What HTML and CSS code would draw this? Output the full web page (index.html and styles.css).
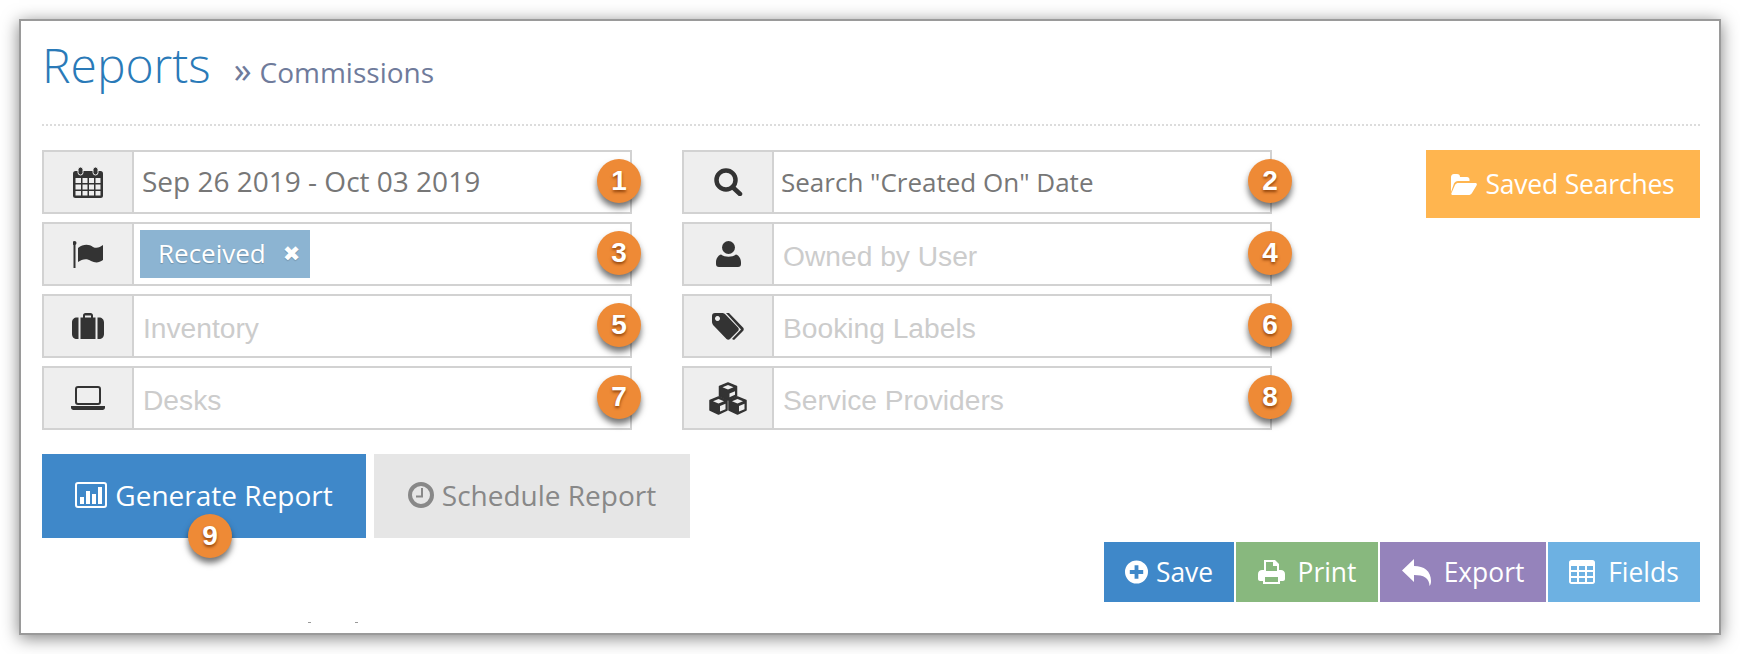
FILE: index.html
```html
<!DOCTYPE html>
<html lang="en">
<head>
<meta charset="utf-8">
<title>Reports - Commissions</title>
<link rel="stylesheet" href="styles.css">
</head>
<body>
<div class="panel">
  <header class="head">
    <h1 class="title">Reports</h1>
    <span class="crumb"><span class="raquo">»</span>Commissions</span>
  </header>
  <div class="filters">
    <div class="grid">
      <div class="field">
        <div class="addon"><svg class="ic" width="30" height="31" viewBox="0 0 30 31"><rect x="0" y="4" width="30" height="27" rx="2.5" fill="#333"/><rect x="5" y="0" width="5" height="8" rx="2.5" fill="#333" stroke="#eee"/><rect x="20" y="0" width="5" height="8" rx="2.5" fill="#333" stroke="#eee"/><g fill="#eee"><rect x="2.5" y="11" width="5.5" height="5"/><rect x="9.5" y="11" width="5" height="5"/><rect x="16" y="11" width="5" height="5"/><rect x="22.5" y="11" width="5" height="5"/><rect x="2.5" y="17.5" width="5.5" height="5"/><rect x="9.5" y="17.5" width="5" height="5"/><rect x="16" y="17.5" width="5" height="5"/><rect x="22.5" y="17.5" width="5" height="5"/><rect x="2.5" y="24" width="5.5" height="4.5"/><rect x="9.5" y="24" width="5" height="4.5"/><rect x="16" y="24" width="5" height="4.5"/><rect x="22.5" y="24" width="5" height="4.5"/></g></svg></div>
        <div class="value value-date">Sep 26 2019 - Oct 03 2019</div>
        <span class="badge">1</span>
      </div>
      <div class="field">
        <div class="addon"><svg class="ic" width="29" height="28" viewBox="0 0 29 28"><circle cx="12" cy="12" r="9.5" fill="none" stroke="#333" stroke-width="4.5"/><path d="M18.5 19l7.5 7" stroke="#333" stroke-width="4.5" stroke-linecap="round"/></svg></div>
        <div class="value">Search "Created On" Date</div>
        <span class="badge badge-edge">2</span>
      </div>
      <div class="field">
        <div class="addon"><svg class="ic" width="30" height="27" viewBox="0 0 30 27"><rect x="0.5" y="2" width="2" height="25" fill="#333"/><circle cx="1.5" cy="2" r="2" fill="#333"/><path d="M5 7C10 3 16 3 20 6c4 2 7 0 10-2v15c-4 3-8 3-12 1-4-3-9-2-13 1z" fill="#333"/></svg></div>
        <div class="value value-tags"><span class="tag">Received<span class="tag-x">✖</span></span></div>
        <span class="badge">3</span>
      </div>
      <div class="field">
        <div class="addon"><svg class="ic" width="25" height="26" viewBox="0 0 25 26"><circle cx="12.5" cy="6.5" r="6.5" fill="#333"/><path d="M5 13.500c4 3 11 3 15 0 3 1 5 4 5 8v1.500c0 2-1 3-3 3H3c-2 0-3-1-3-3v-1.500c0-4 2-7 5-8z" fill="#333"/></svg></div>
        <div class="value placeholder">Owned by User</div>
        <span class="badge badge-edge">4</span>
      </div>
      <div class="field">
        <div class="addon"><svg class="ic" width="32" height="26" viewBox="0 0 32 26"><path d="M11 5V2.500C11 1 12 0 13.500 0h5C20 0 21 1 21 2.500V5h-2V2.500h-6V5z" fill="#333"/><path d="M5 4.500h1.500V26H5c-3 0-5-2-5-5V9.500c0-3 2-5 5-5zM8.500 4.500h15V26h-15zM25.500 4.500H27c3 0 5 2 5 5V21c0 3-2 5-5 5h-1.500z" fill="#333"/></svg></div>
        <div class="value placeholder">Inventory</div>
        <span class="badge">5</span>
      </div>
      <div class="field">
        <div class="addon"><svg class="ic" width="33" height="27" viewBox="0 0 33 27"><path fill-rule="evenodd" d="M0 3C0 1 1 0 3 0h7c1.500 0 2.500.5 3.500 1.500L26 14.500c1 1 1 2.500 0 3.500l-8 8c-1 1-2.500 1-3.500 0L2 13c-1-1-2-2.500-2-4zM5.500 3a2.500 2.500 0 1 0 .01 0z" fill="#333"/><path d="M17 0l14 14.500c1 1 1 2.500 0 3.500l-9 9-2-1 9-9.500L14 0z" fill="#333"/></svg></div>
        <div class="value placeholder">Booking Labels</div>
        <span class="badge badge-edge">6</span>
      </div>
      <div class="field">
        <div class="addon"><svg class="ic" width="34" height="24" viewBox="0 0 34 24"><rect x="5" y="1" width="24" height="17" rx="2" fill="none" stroke="#333" stroke-width="2"/><path d="M0 20h34v1.500c0 1.500-1 2.500-2.500 2.500h-29C1 24 0 23 0 21.500z" fill="#333"/></svg></div>
        <div class="value placeholder">Desks</div>
        <span class="badge">7</span>
      </div>
      <div class="field">
        <div class="addon"><svg class="ic" width="38" height="33" viewBox="0 0 38 33"><g fill="#333" stroke="#333" stroke-width="1.500" stroke-linejoin="round"><path d="M19 1l8.500 3.500v9.500L19 18l-8.500-4V4.500z"/><path d="M9.500 15l8.500 3.500V28l-8.500 4L1 28v-9.500z"/><path d="M28.500 15l8.500 3.500V28l-8.500 4-8.500-4v-9.500z"/></g><g fill="#eee"><path d="M19 3l5.500 2.300L19 7.600l-5.500-2.300z"/><path d="M9.500 17l5.500 2.300-5.500 2.300L4 19.300z"/><path d="M28.500 17l5.500 2.300-5.500 2.300-5.500-2.300z"/><path d="M11 24l5.500-2.300v5.500L11 29.500zM30 24l5.500-2.300v5.500L30 29.500zM20.500 11.500l5.500-2.300v3.600l-5.500 2.400z"/></g></svg></div>
        <div class="value placeholder">Service Providers</div>
        <span class="badge badge-edge">8</span>
      </div>
    </div>
    <a class="btn btn-saved"><svg class="ic-btn" width="26" height="21" viewBox="0 0 26 21"><path d="M0 18V3c0-1.500 1-3 3-3h3c2 0 3 1 3 3h7c1.500 0 2.500 1 2.500 2.500V7H7C5 7 4 8 3 9.500z" fill="#fff"/><path d="M7.500 9H24c1.500 0 2.500 1 1.500 2.500L21 19c-1 1.500-2 2-3.500 2H2c-1.500 0-2-1-1.500-2L4 11c1-1.500 2-2 3.500-2z" fill="#fff"/></svg>Saved Searches</a>
  </div>
  <div class="actions">
    <a class="btn btn-generate"><svg class="ic-btn" width="32" height="26" viewBox="0 0 32 26"><rect x="1" y="1" width="30" height="24" rx="2" fill="none" stroke="#fff" stroke-width="2"/><g fill="#fff"><rect x="5" y="15" width="4" height="7"/><rect x="11" y="9" width="4" height="13"/><rect x="17" y="12" width="4" height="10"/><rect x="23" y="5" width="4" height="17"/></g></svg>Generate Report<span class="badge badge-gen">9</span></a>
    <a class="btn btn-schedule"><svg class="ic-btn" width="26" height="26" viewBox="0 0 26 26"><circle cx="13" cy="13" r="11" fill="none" stroke="#888" stroke-width="4"/><path d="M14 6v8.500H8" fill="none" stroke="#888" stroke-width="2"/></svg>Schedule Report</a>
  </div>
  <div class="toolbar">
    <a class="btn tool tool-save"><svg class="ic-tool" width="23" height="24" viewBox="0 0 24 24"><path fill-rule="evenodd" d="M12 0a12 12 0 1 1 0 24 12 12 0 0 1 0-24zM10 5v5H5v4h5v5h4v-5h5v-4h-5V5z" fill="#fff"/></svg>Save</a>
    <a class="btn tool tool-print"><svg class="ic-tool ic-wide" width="27" height="24" viewBox="0 0 27 24"><path fill-rule="evenodd" d="M6 0h11l4 4v6h2c2 0 4 1.500 4 4v5c0 1-1 2-2 2h-3v3H5v-3H2c-1 0-2-1-2-2v-5c0-2.500 2-4 4-4h2zM8 2v9h11V6h-4V2zM7 17v5h13v-5z" fill="#fff"/></svg>Print</a>
    <a class="btn tool tool-export"><svg class="ic-tool ic-wide" width="29" height="27" viewBox="0 0 29 27"><path d="M12 0v7c10 0 17 5 17 15 0 2-.5 4-1.500 5 0-8-6-11-15.500-11v7L0 11.500z" fill="#fff"/></svg>Export</a>
    <a class="btn tool tool-fields"><svg class="ic-tool ic-wide" width="26" height="24" viewBox="0 0 26 24"><path fill-rule="evenodd" d="M2.500 0h21C25 0 26 1 26 2.500v19c0 1.500-1 2.500-2.500 2.500h-21C1 24 0 23 0 21.500v-19C0 1 1 0 2.500 0zM2 6v4h6V6zm8 0v4h6V6zm8 0v4h6V6zM2 12v4h6v-4zm8 0v4h6v-4zm8 0v4h6v-4zM2 18v4h6v-4zm8 0v4h6v-4zm8 0v4h6v-4z" fill="#fff"/></svg>Fields</a>
  </div>
  <div class="cutoff"><i></i><i></i></div>
</div>
</body>
</html>
```
FILE: styles.css
```css
* { box-sizing: border-box; }
html, body { margin: 0; padding: 0; background: #fff; height: 654px; overflow: hidden; }
body { padding: 19px 19px 0; font-family: "Open Sans", sans-serif; }

.panel {
  position: relative;
  width: 1702px;
  height: 616px;
  background: #fff;
  border: 2px solid #9a9a9a;
  box-shadow: 0 3px 16px rgba(0, 0, 0, .5);
  padding: 0 19px 0 21px;
}

.head {
  display: flex;
  align-items: baseline;
  height: 105px;
  padding-top: 12px;
  border-bottom: 2px dotted #dcdcdc;
}
.title {
  margin: 0;
  font-size: 48px;
  font-weight: 300;
  line-height: 64px;
  color: #2a7ab8;
}
.crumb {
  margin-left: 23px;
  font-size: 28px;
  color: #6f7b9b;
}
.raquo { margin-right: 8px; font-size: 36px; line-height: 1; }

.filters {
  display: flex;
  justify-content: space-between;
  align-items: flex-start;
  margin-top: 24px;
}
.grid {
  display: grid;
  grid-template-columns: 590px 590px;
  grid-auto-rows: 64px;
  column-gap: 50px;
  row-gap: 8px;
}
.field {
  position: relative;
  display: flex;
  border: 2px solid #d2d2d2;
  background: #fff;
}
.addon {
  width: 90px;
  flex: none;
  display: flex;
  align-items: center;
  justify-content: center;
  background: #eee;
  border-right: 2px solid #d2d2d2;
}
.ic { display: block; }
.value {
  flex: 1;
  display: flex;
  align-items: center;
  padding-left: 7px;
  font-size: 26px;
  color: #777;
}
.value-date { padding-left: 8px; padding-bottom: 2px; font-size: 28px; }
.placeholder {
  padding-left: 9px;
  padding-top: 4px;
  font-family: "Liberation Sans", Arial, sans-serif;
  font-size: 28.200px;
  color: #ccc;
}
.value-tags { padding-left: 6px; }
.tag {
  display: flex;
  align-items: center;
  height: 48px;
  width: 170px;
  padding-left: 18px;
  padding-bottom: 3px;
  background: #8cb4d2;
  color: #fff;
  font-size: 26px;
  text-shadow: 0 1px 1px rgba(0, 0, 0, .2);
}
.tag-x { margin-left: 17px; padding-top: 3px; font-family: "DejaVu Sans", sans-serif; font-size: 21px; }

.badge {
  position: absolute;
  right: -11px;
  top: 7px;
  width: 44px;
  height: 44px;
  border-radius: 50%;
  background: #ee8a36;
  box-shadow: 0 5px 6px rgba(0, 0, 0, .55);
  color: #fff;
  font-family: "Liberation Sans", Arial, sans-serif;
  font-size: 28px;
  font-weight: 700;
  line-height: 44px;
  text-align: center;
  text-shadow: 0 2px 3px rgba(120, 50, 0, .8);
}
.badge-edge { right: -22px; }

.btn {
  display: flex;
  align-items: center;
  justify-content: center;
  color: #fff;
}
.btn-saved {
  width: 274px;
  height: 68px;
  background: #ffb54f;
  font-size: 26.500px;
  letter-spacing: -.2px;
}
.ic-btn { margin-right: 8px; flex: none; }

.actions {
  display: flex;
  gap: 8px;
  margin-top: 24px;
}
.btn-generate, .btn-schedule {
  height: 84px;
  padding-bottom: 2px;
  font-size: 28px;
}
.btn-generate { position: relative; width: 324px; background: #3f88c9; }
.btn-schedule { width: 316px; background: #e6e6e6; color: #888; }
.badge-gen { right: auto; left: 146px; top: 60px; }

.toolbar {
  display: flex;
  justify-content: flex-end;
  gap: 2px;
  margin-top: 4px;
}
.tool { height: 60px; font-size: 26.400px; }
.ic-tool { margin-right: 8px; flex: none; }
.ic-wide { margin-right: 13px; }
.tool-save { width: 130px; background: #3f88c9; }
.tool-print { width: 142px; background: #88b87e; }
.tool-export { width: 166px; background: #9583bb; }
.tool-fields { width: 152px; background: #6db1e2; }

.cutoff {
  position: absolute;
  left: 287px;
  top: 601px;
  display: flex;
  gap: 44px;
}
.cutoff i { display: block; width: 3px; height: 1px; background: #999; }
```
